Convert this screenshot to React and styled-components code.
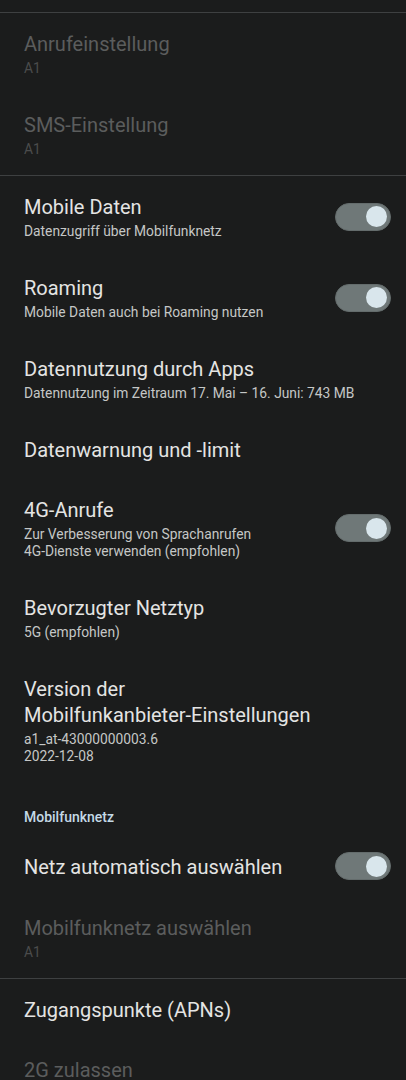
import React from "react";
import styled, { createGlobalStyle } from "styled-components";

const GlobalStyle = createGlobalStyle`
  html, body {
    margin: 0;
    padding: 0;
    background: #1b1c1c;
  }
  body {
    font-family: Roboto, "Noto Sans", sans-serif;
    -webkit-font-smoothing: antialiased;
  }
`;

const Screen = styled.div`
  width: 406px;
  height: 1080px;
  overflow: hidden;
  background: #1b1c1c;
  display: flex;
  flex-direction: column;
`;

const TopSpace = styled.div`
  height: 12px;
  flex-shrink: 0;
`;

const Divider = styled.div`
  height: 1px;
  flex-shrink: 0;
  background: #3e4041;
`;

const Row = styled.div`
  display: flex;
  align-items: center;
  padding: 17px 15px 17px 24px;
  flex-shrink: 0;
`;

const Text = styled.div`
  flex: 1;
  min-width: 0;
`;

const Title = styled.div`
  font-size: 20px;
  line-height: 26px;
  padding-top: 1px;
  margin-bottom: -1px;
  white-space: pre-line;
  color: ${(p) => (p.$disabled ? "#5b5d5d" : "#e4e4e3")};
`;

const Summary = styled.div`
  margin-top: 4px;
  font-size: 13.8px;
  line-height: 17px;
  color: ${(p) => (p.$disabled ? "#4b4c4c" : "#c5c7c6")};
  white-space: pre-line;
`;

const Category = styled.div`
  padding: 25px 24px 8px;
  font-size: 14px;
  line-height: 20px;
  font-weight: 500;
  color: #c4d9e6;
  flex-shrink: 0;
`;

const Track = styled.div`
  width: 56px;
  height: 28px;
  box-sizing: border-box;
  border-radius: 14px;
  background: #6f7878;
  border: 1px solid #646c6c;
  display: flex;
  align-items: center;
  justify-content: flex-end;
  padding-right: 3px;
  margin-left: 16px;
  flex-shrink: 0;
`;

const Thumb = styled.div`
  width: 21px;
  height: 21px;
  border-radius: 50%;
  background: #d9e6ec;
`;

const Switch = () => (
  <Track>
    <Thumb />
  </Track>
);

const Pref = ({ title, summary, disabled, toggle }) => (
  <Row>
    <Text>
      <Title $disabled={disabled}>{title}</Title>
      {summary && <Summary $disabled={disabled}>{summary}</Summary>}
    </Text>
    {toggle && <Switch />}
  </Row>
);

export default function App() {
  return (
    <Screen>
      <GlobalStyle />
      <TopSpace />
      <Divider />
      <Pref title="Anrufeinstellung" summary="A1" disabled />
      <Pref title="SMS-Einstellung" summary="A1" disabled />
      <Divider />
      <Pref title="Mobile Daten" summary="Datenzugriff über Mobilfunknetz" toggle />
      <Pref title="Roaming" summary="Mobile Daten auch bei Roaming nutzen" toggle />
      <Pref
        title="Datennutzung durch Apps"
        summary="Datennutzung im Zeitraum 17. Mai – 16. Juni: 743 MB"
      />
      <Pref title="Datenwarnung und -limit" />
      <Pref
        title="4G-Anrufe"
        summary={"Zur Verbesserung von Sprachanrufen\n4G-Dienste verwenden (empfohlen)"}
        toggle
      />
      <Pref title="Bevorzugter Netztyp" summary="5G (empfohlen)" />
      <Pref
        title={"Version der\nMobilfunkanbieter-Einstellungen"}
        summary={"a1_at-43000000003.6\n2022-12-08"}
      />
      <Category>Mobilfunknetz</Category>
      <Pref title="Netz automatisch auswählen" toggle />
      <Pref title="Mobilfunknetz auswählen" summary="A1" disabled />
      <Divider />
      <Pref title="Zugangspunkte (APNs)" />
      <Pref title="2G zulassen" disabled />
    </Screen>
  );
}
